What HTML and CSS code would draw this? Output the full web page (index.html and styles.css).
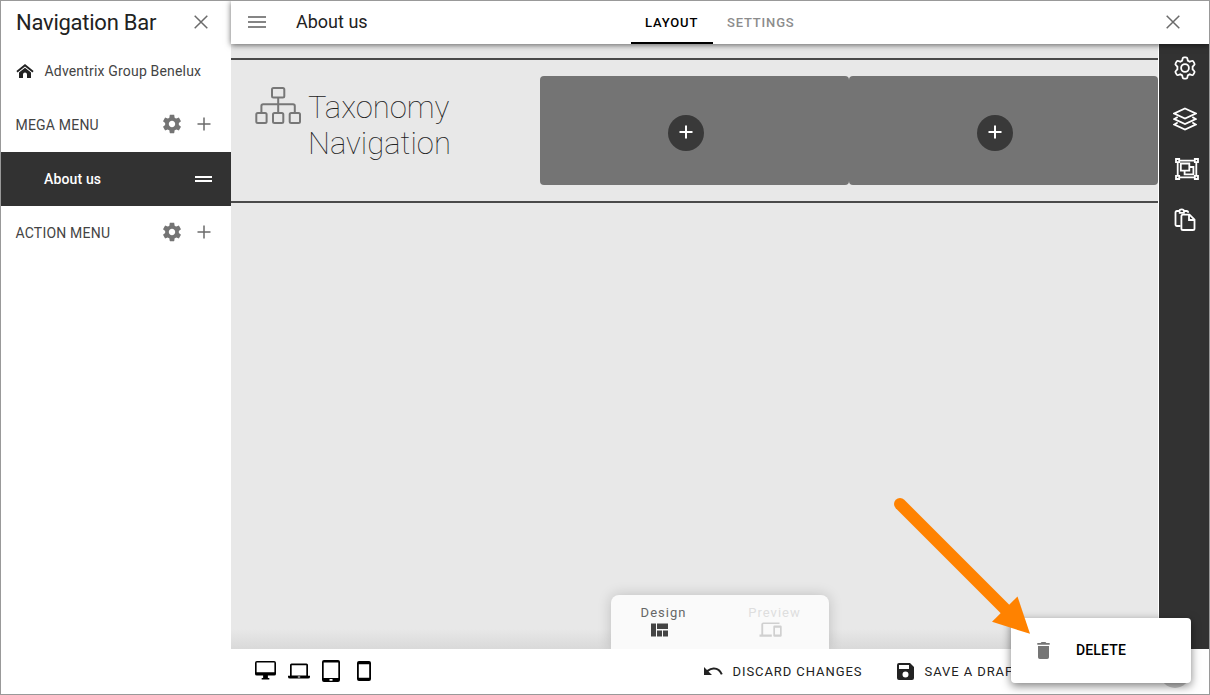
FILE: index.html
```html
<!DOCTYPE html>
<html lang="en">
<head>
<meta charset="utf-8">
<title>Navigation Bar</title>
<link rel="stylesheet" href="styles.css">
</head>
<body>
<svg class="defs" width="0" height="0">
  <symbol id="gear" viewBox="0 0 24 24"><path d="M19.43 12.98c.04-.32.07-.64.07-.98s-.03-.66-.07-.98l2.11-1.65c.19-.15.24-.42.12-.64l-2-3.46c-.12-.22-.39-.3-.61-.22l-2.49 1c-.52-.4-1.08-.73-1.69-.98l-.38-2.65C14.46 2.18 14.25 2 14 2h-4c-.25 0-.46.18-.49.42l-.38 2.65c-.61.25-1.17.59-1.69.98l-2.49-1c-.23-.09-.49 0-.61.22l-2 3.46c-.13.22-.07.49.12.64l2.11 1.65c-.04.32-.07.65-.07.98s.03.66.07.98l-2.11 1.65c-.19.15-.24.42-.12.64l2 3.46c.12.22.39.3.61.22l2.49-1c.52.4 1.08.73 1.69.98l.38 2.65c.03.24.24.42.49.42h4c.25 0 .46-.18.49-.42l.38-2.65c.61-.25 1.17-.59 1.69-.98l2.49 1c.23.09.49 0 .61-.22l2-3.46c.12-.22.07-.49-.12-.64l-2.11-1.65zM12 15.5c-1.93 0-3.5-1.57-3.5-3.5s1.57-3.500 3.500-3.500 3.500 1.570 3.500 3.500-1.570 3.500-3.500 3.500z"/></symbol>
  <symbol id="plus" viewBox="0 0 14 14"><path d="M7 .5v13M.5 7h13"/></symbol>
  <symbol id="cross" viewBox="0 0 14 14"><path d="M.7.7l12.6 12.6M13.3.7L.7 13.3"/></symbol>
</svg>
<div class="frame">
  <aside class="sidebar">
    <header class="side-head">
      <h1 class="side-title">Navigation Bar</h1>
      <svg class="line-icon" width="14" height="14"><use href="#cross"/></svg>
    </header>
    <div class="site">
      <svg width="18" height="14" viewBox="0 0 18 14"><path d="M9 0l8.600 7-1.100 1.400L9 2.400 1.500 8.400.4 7z"/><path d="M9 3.700l6 4.800V14h-4v-3.500a2 2 0 0 0-4 0V14H3V8.500z"/></svg>
      <span>Adventrix Group Benelux</span>
    </div>
    <div class="group"><span class="group-name">MEGA MENU</span>
      <svg class="gear" width="22" height="22"><use href="#gear"/></svg>
      <svg class="line-icon" width="14" height="14"><use href="#plus"/></svg>
    </div>
    <div class="item"><span>About us</span><i class="handle"></i></div>
    <div class="group"><span class="group-name">ACTION MENU</span>
      <svg class="gear" width="22" height="22"><use href="#gear"/></svg>
      <svg class="line-icon" width="14" height="14"><use href="#plus"/></svg>
    </div>
  </aside>
  <main class="main">
    <header class="topbar">
      <i class="burger"></i>
      <h2 class="page-title">About us</h2>
      <nav class="tabs"><span class="tab active">LAYOUT</span><span class="tab">SETTINGS</span></nav>
      <svg class="line-icon" width="14" height="14"><use href="#cross"/></svg>
    </header>
    <div class="work">
      <div class="canvas">
        <section class="section">
          <div class="taxonomy">
            <svg class="tree" width="46" height="37" viewBox="0 0 46 37"><rect x="17" y="1" width="12.300" height="9.500" rx="1.500"/><rect x="1.300" y="26" width="10.300" height="10" rx="1.500"/><rect x="18" y="26" width="10.300" height="10" rx="1.500"/><rect x="34.700" y="26" width="10.300" height="10" rx="1.500"/><path d="M23.200 10.500V26M6.400 26v-7q0-1.800 1.800-1.800H38q1.800 0 1.800 1.800v7"/></svg>
            <span class="tax-name">Taxonomy<br>Navigation</span>
          </div>
          <div class="slot"><span class="add"><svg width="14" height="14"><use href="#plus"/></svg></span></div>
          <div class="slot"><span class="add"><svg width="14" height="14"><use href="#plus"/></svg></span></div>
        </section>
      </div>
      <div class="rail">
        <svg width="24" height="24" viewBox="0 0 24 24"><path d="M9.600 2.600q.2-1.200 1.400-1.200h2q1.200 0 1.400 1.200l.4 2 1.900 1.100 2-.7q1.100-.4 1.700.6l1 1.800q.6 1-.3 1.800L19.600 10.700v2.600l1.500 1.500q.9.800.3 1.800l-1 1.800q-.6 1-1.700.6l-2-.7-1.900 1.100-.4 2q-.2 1.200-1.400 1.200h-2q-1.200 0-1.400-1.200l-.4-2-1.900-1.100-2 .7q-1.100.4-1.700-.6l-1-1.800q-.6-1 .3-1.800l1.500-1.500v-2.600L2.900 9.200Q2 8.400 2.600 7.400l1-1.800q.6-1 1.700-.6l2 .7 1.900-1.100z"/><circle cx="12" cy="12" r="3.900"/></svg>
        <svg width="24" height="24" viewBox="0 0 24 24"><path d="M12 1.500L22.700 6.500 12 11.500 1.300 6.500zM4.700 10L1.300 12 12 17l10.700-5-3.400-2M4.700 15.500l-3.400 2L12 22.500l10.700-5-3.400-2"/></svg>
        <svg class="group-icon" width="24" height="22" viewBox="0 0 24 22"><path d="M4 2.600h16M4 19.400h16M2.700 4v14M21.300 4v14"/><path d="M5.800 5.500h8.500v7.200H5.800zM15 9h3.400v7.400h-8.800v-3"/><path d="M1 1h3.200v3.200H1zM19.800 1H23v3.200h-3.200zM1 17.800h3.200V21H1zM19.800 17.800H23V21h-3.200z"/></svg>
        <svg class="paste" width="22" height="23" viewBox="0 0 22 23"><path d="M6.500 18H3q-1.500 0-1.500-1.500V4.500Q1.500 3 3 3h2.500q0-1.700 2.200-1.700T10 3h2.500q1.700 0 1.700 1.700M4.800 4.800h6"/><path d="M9 6.700h6.500l5 5v8.700q0 1.600-1.600 1.600H9q-1.600 0-1.600-1.600V8.300q0-1.600 1.600-1.600zM15 7v5h5"/></svg>
      </div>
      <div class="modes">
        <div class="mode">Design
          <svg width="17" height="14" viewBox="0 0 17 14"><path d="M0 .5h5V13.500H0zM6 .5h11v5.500H6zM6 7.500h5v6H6zM12 7.500h5v6h-5z"/></svg>
        </div>
        <div class="mode off">Preview
          <svg width="23" height="16" viewBox="0 0 23 16"><path fill-rule="evenodd" d="M2.300 12.500V2.500Q2.300.5 4.300.5H20.500V2H4.200v10.500h8.600v2.300H.5v-2.300zM15.500 3.500H21.500q1.200 0 1.200 1.200v8.900q0 1.200-1.200 1.200h-6q-1.200 0-1.200-1.200V4.700q0-1.200 1.200-1.200zm.5 2.200v6.800h5V5.700z"/></svg>
        </div>
      </div>
    </div>
    <footer class="bottom">
      <div class="devices">
        <svg width="21" height="19" viewBox="0 0 22 19" preserveAspectRatio="none"><path fill-rule="evenodd" d="M2 0h18q2 0 2 2v11q0 1.500-2 1.500h-6.500V17H15v1.500H7V17h1.500v-2.500H2q-2 0-2-1.500V2Q0 0 2 0zm-.3 1.600v9.600h18.600V1.600z"/></svg>
        <svg width="22" height="16" viewBox="0 0 22 16"><path fill-rule="evenodd" d="M3.500.5h15q1.500 0 1.500 1.500v10.800h2V14q0 1.500-2 1.500H2Q0 15.500 0 14v-1.200h2V2Q2 .5 3.500.5zM3.700 2.300v10.200h14.600V2.300zM9.800 13.400v1h2.400v-1z"/></svg>
        <svg width="18" height="22" viewBox="0 0 18 22"><path fill-rule="evenodd" d="M2 0h14q2 0 2 2v18q0 2-2 2H2q-2 0-2-2V2q0-2 2-2zm-.3 2.500V18h14.600V2.500zM7.500 19v1.800h3V19z"/></svg>
        <svg class="phone" width="14" height="20" viewBox="0 0 14 20"><path fill-rule="evenodd" d="M2 0h10q2 0 2 2v16q0 2-2 2H2q-2 0-2-2V2q0-2 2-2zm-.2 3.200v13.600h10.400V3.200z"/></svg>
      </div>
      <div class="action"><svg width="19" height="9" viewBox="0 0 19 9"><path d="M0 0l3 3Q6.500.2 10 .4q6.300.2 8.700 6.600l-1.800.7Q14.500 2.600 10 2.500 7.200 2.300 4.500 4.500L8 8H0z"/></svg><span>DISCARD CHANGES</span></div>
      <div class="action save"><svg width="17" height="17" viewBox="0 0 17 17"><path fill-rule="evenodd" d="M2 0h11l4 4v11q0 2-2 2H2q-2 0-2-2V2q0-2 2-2zm0 2v4h10V2zm6.500 6.500a3 3 0 1 0 0 6 3 3 0 0 0 0-6z"/></svg><span>SAVE A DRAFT</span></div>
      <span class="more"></span>
    </footer>
  </main>
  <div class="popup"><svg width="13" height="17" viewBox="0 0 13 17"><path d="M.3 1h3.300l1-1h3.800l1 1h3.300v1.800H.3zM1 4h11v11.200Q12 17 10.200 17H2.800Q1 17 1 15.200z"/></svg><span>DELETE</span></div>
  <svg class="arrow" width="140" height="144" viewBox="0 0 140 144"><path class="shaft" d="M9 13L115 119"/><path d="M126.500 105.500L139 142.800 101 130.800z"/></svg>
</div>
</body>
</html>
```
FILE: styles.css
```css
* { box-sizing: border-box; }
body { margin: 0; font-family: Roboto, "Liberation Sans", sans-serif; color: #222; }
.defs { position: absolute; }
svg { display: block; flex: none; }
h1, h2 { margin: 0; font-weight: 400; }
.frame { position: relative; display: grid; grid-template-columns: 230px 1fr; width: 1210px; height: 695px; border: 1px solid #999; overflow: hidden; background: #fff; }
.line-icon { fill: none; stroke: #6b6b6b; stroke-width: 1.5; margin-bottom: 2px; }
.side-head { display: flex; align-items: center; justify-content: space-between; height: 43px; padding: 0 23px 0 15px; }
.side-title { font-size: 22px; line-height: 42px; letter-spacing: -.25px; }
.site { display: flex; align-items: center; gap: 11px; height: 54px; padding-left: 14.5px; font-size: 14px; letter-spacing: .18px; color: #444; fill: #222; }
.group { display: flex; align-items: center; height: 54px; padding: 0 20px 0 14.500px; gap: 14px; }
.group-name { flex: 1; font-size: 14px; letter-spacing: .2px; color: #444; }
.gear { fill: #747474; margin-bottom: 2px; }
.item { display: flex; align-items: center; justify-content: space-between; height: 54px; padding: 0 19px 0 43px; background: #323232; color: #fff; font-size: 14px; font-weight: 500; letter-spacing: .15px; }
.handle { width: 17px; height: 6px; border: solid #fff; border-width: 2px 0; }
.main { position: relative; display: grid; grid-template-rows: 43px 605px 45px; min-width: 0; }
.topbar { position: relative; z-index: 2; display: flex; align-items: center; padding: 0 29px 0 17px; background: #fff; box-shadow: 0 1px 6px rgba(0,0,0,.6); }
.burger { width: 18px; height: 12px; margin-bottom: 2px; border: solid #858585; border-width: 2px 0; background: linear-gradient(#858585, #858585) 0 3px / 18px 2px no-repeat; }
.page-title { width: 364px; padding: 0 0 2px 30px; font-size: 18px; }
.tabs { display: flex; flex: 1; align-self: stretch; padding-left: 1px; }
.tab { padding: 0 14px; line-height: 43px; font-size: 13px; font-weight: 500; letter-spacing: .83px; color: #8c8c8c; }
.tab.active { width: 82px; border-bottom: 2px solid #000; color: #000; }
.work { position: relative; display: grid; grid-template-columns: 927px 50px; column-gap: 1px; min-height: 0; background: #fff; overflow: hidden; }
.canvas { padding-top: 14px; background: linear-gradient(#e8e8e8 585px, #d9d9d9 605px); }
.section { display: grid; grid-template-columns: repeat(3, 1fr); height: 145px; padding: 16px 0; border: solid #4a4a4a; border-width: 2px 0; }
.taxonomy { display: flex; gap: 7px; padding: 11px 0 0 24px; }
.tree { fill: none; stroke: #777; stroke-width: 2; }
.tax-name { font-size: 31px; line-height: 36px; font-weight: 100; color: #222; margin-top: 3px; }
.slot { display: flex; align-items: center; justify-content: center; height: 109px; padding: 4px 18px 0 0; background: #747474; border-radius: 4px; }
.add { display: grid; place-items: center; width: 36px; height: 36px; border-radius: 50%; background: #393939; }
.add svg { stroke: #fff; stroke-width: 2; margin-top: -2px; }
.rail { display: flex; flex-direction: column; align-items: center; gap: 27px; padding: 12px 0 0 2px; background: #323232; fill: none; stroke: #fff; stroke-width: 1.8; }
.group-icon { margin: 0 0 2px 3px; }
.paste { margin-top: -1px; }
.modes { position: absolute; left: 380px; bottom: 0; display: grid; grid-template-columns: 109px 109px; width: 218px; height: 54px; padding-top: 10px; border-radius: 8px 8px 0 0; background: #fafafa; box-shadow: 0 0 14px rgba(0,0,0,.18); }
.mode { display: flex; flex-direction: column; align-items: center; gap: 3px; padding-right: 4px; font-size: 13px; line-height: 15px; letter-spacing: 1px; color: #666; fill: #444; }
.mode svg { margin-right: 8px; }
.mode.off { gap: 2px; color: #dedede; fill: #d0d0d0; padding: 0; }
.bottom { position: relative; z-index: 1; display: flex; align-items: center; background: #fff; fill: #222; }
.devices { display: flex; align-items: center; gap: 12px; width: 473px; padding: 0 0 2px 24px; fill: #000; }
.phone { margin-left: 5px; }
.action { display: flex; align-items: center; gap: 9.500px; width: 193px; font-size: 13px; letter-spacing: .92px; }
.save { gap: 10.500px; width: 260px; }
.more { width: 30px; height: 30px; border-radius: 50%; background: #ccc; margin: 3px 0 0 3px; }
.popup { position: absolute; z-index: 3; left: 1010px; top: 617px; display: flex; align-items: center; gap: 26px; width: 180px; height: 65px; padding: 0 0 1px 26px; border-radius: 4px; background: #fff; box-shadow: 0 3px 10px rgba(0,0,0,.5); fill: #757575; color: #000; font-size: 14px; font-weight: 500; letter-spacing: .15px; }
.arrow { position: absolute; z-index: 4; left: 890px; top: 490px; overflow: visible; fill: #ff8200; }
.shaft { stroke: #ff8200; stroke-width: 12; stroke-linecap: round; }
```
